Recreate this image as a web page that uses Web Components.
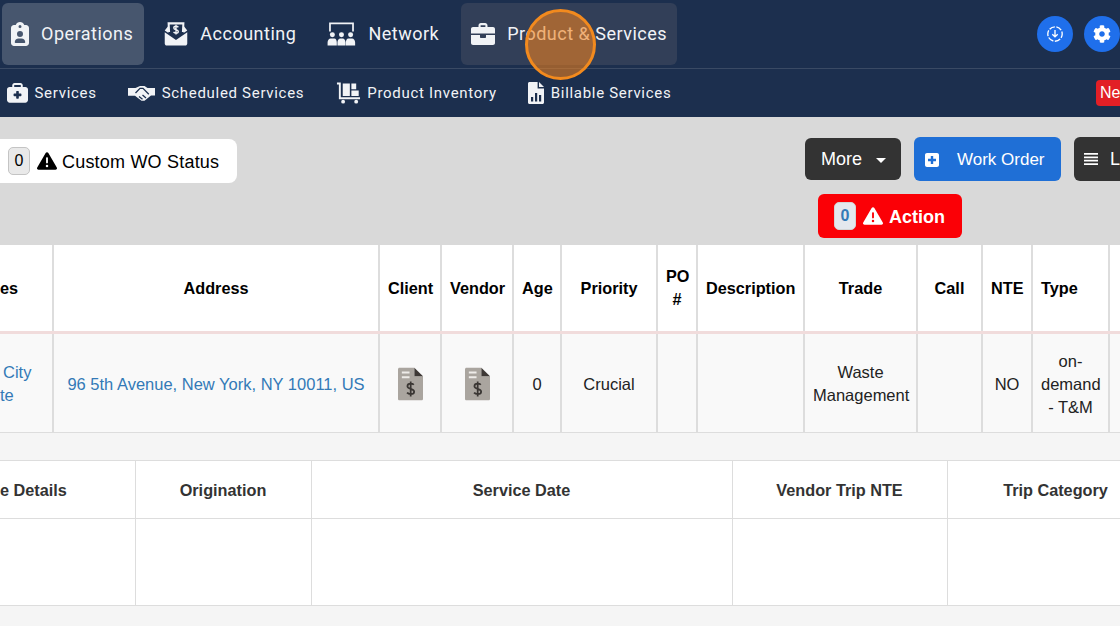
<!DOCTYPE html>
<html>
<head>
<meta charset="utf-8">
<title>Work Orders</title>
<style>
  html, body { margin: 0; height: 626px; overflow: hidden; background: #f5f5f5; }
  body { font-family: "Liberation Sans", Arial, sans-serif; }
</style>
</head>
<body>
<app-topbar>
  <nav-item active icon="clipboard" text="Operations"></nav-item>
  <nav-item icon="envelope" text="Accounting"></nav-item>
  <nav-item icon="network" text="Network"></nav-item>
  <nav-item hover icon="briefcase" text="Product &amp; Services"></nav-item>
  <round-btn slot="end" icon="download"></round-btn>
  <round-btn slot="end" icon="gear"></round-btn>
</app-topbar>
<app-subbar>
  <sub-item icon="medical" text="Services"></sub-item>
  <sub-item icon="handshake" text="Scheduled Services"></sub-item>
  <sub-item icon="dolly" text="Product Inventory"></sub-item>
  <sub-item icon="filechart" text="Billable Services"></sub-item>
  <span slot="end">Ne</span>
</app-subbar>
<app-toolbar></app-toolbar>
<wo-table id="main"></wo-table>
<wo-table id="trips"></wo-table>
<click-marker></click-marker>

<script>
// icon markup, each one keeps its own viewBox and its drawn size
const ICONS = {
  clipboard: `<svg width="18" height="24" viewBox="0 0 384 512" fill="currentColor"><path d="M192 0c-41.8 0-77.4 26.7-90.5 64H64C28.7 64 0 92.7 0 128V448c0 35.3 28.7 64 64 64H320c35.3 0 64-28.7 64-64V128c0-35.3-28.7-64-64-64H282.5C269.4 26.7 233.8 0 192 0zm0 64a32 32 0 1 1 0 64 32 32 0 1 1 0-64zM128 256a64 64 0 1 1 128 0 64 64 0 1 1 -128 0zM80 432c0-44.2 35.8-80 80-80h64c44.2 0 80 35.8 80 80c0 8.8-7.2 16-16 16H96c-8.8 0-16-7.2-16-16z"/></svg>`,
  envelope: `<svg width="24" height="25" viewBox="0 0 26 26" preserveAspectRatio="none" fill="currentColor"><path d="M5.500 11.500 5 2.500H21L20.500 11.500" fill="none" stroke="currentColor" stroke-width="2.200"/><path d="M4.400 5.500 .8 9.800 4.800 12.500zM21.600 5.500 25.200 9.800 21.200 12.500z"/><path d="M15.600 6.400C15 5.800 14.100 5.500 13 5.500 11.600 5.500 10.600 6.200 10.600 7.300 10.600 9.500 15.500 8.600 15.500 10.800 15.500 11.900 14.400 12.500 13 12.500 11.900 12.500 10.900 12.100 10.300 11.500M13 4V14" fill="none" stroke="currentColor" stroke-width="1.500"/><path d="M.8 11.800 13 19.800 25.200 11.800V23.400C25.200 24.600 24.200 25.600 23 25.600H3C1.800 25.600 .8 24.600 .8 23.400z"/></svg>`,
  network: `<svg width="29" height="24" viewBox="0 0 30 25"><path d="M3 10V1.500H27V10" fill="none" stroke="currentColor" stroke-width="1.800"/><g fill="currentColor"><circle cx="5.500" cy="13.200" r="2.600"/><circle cx="15" cy="13.200" r="2.600"/><circle cx="24.500" cy="13.200" r="2.600"/><path d="M.5 24.500v-3.200c0-2 1.400-4 3.200-4h3.800c1.800 0 2.600 2 2.600 4v3.200zM10.800 24.500v-3.200c0-2 1.200-4 3-4h2.400c1.800 0 3 2 3 4v3.200zM19.600 24.500v-3.200c0-2 .8-4 2.600-4h3.800c1.800 0 3.200 2 3.200 4v3.200z"/></g></svg>`,
  briefcase: `<svg width="24" height="22" viewBox="0 0 24 22" fill="currentColor"><path fill-rule="evenodd" d="M7.500 4V2.400C7.500 1.100 8.600 0 9.900 0h4.200c1.300 0 2.400 1.100 2.400 2.400V4H22c1.100 0 2 .9 2 2v4.400H0V6c0-1.100.9-2 2-2zM9.600 2.200V4h4.800V2.200z"/><path d="M0 12h9v2c0 .6.4 1 1 1h4c.6 0 1-.4 1-1v-2h9v8c0 1.100-.9 2-2 2H2c-1.100 0-2-.9-2-2z"/></svg>`,
  medical: `<svg width="21" height="21" viewBox="0 0 512 512" fill="currentColor"><path d="M184 48H328c4.400 0 8 3.600 8 8V96H176V56c0-4.400 3.600-8 8-8zm-56 8V96H64C28.700 96 0 124.700 0 160V416c0 35.300 28.700 64 64 64H448c35.300 0 64-28.700 64-64V160c0-35.300-28.700-64-64-64H384V56c0-30.900-25.100-56-56-56H184c-30.900 0-56 25.100-56 56zm96 152c0-8.800 7.200-16 16-16h32c8.800 0 16 7.200 16 16v48h48c8.800 0 16 7.200 16 16v32c0 8.800-7.200 16-16 16H288v48c0 8.800-7.200 16-16 16H240c-8.800 0-16-7.200-16-16V320H176c-8.800 0-16-7.200-16-16V272c0-8.800 7.200-16 16-16h48V208z"/></svg>`,
  handshake: `<svg width="27" height="16" viewBox="0 0 27 16"><path d="M0 3H7.500L12 1H16.500L19.500 3H27V10.500H23L16.500 15.800H13.500L7 10.800H0z" fill="currentColor"/><path d="M7.500 8 12 3.400H15L20.800 9.200M14.500 10 18 13M11 11.500 14.500 14.300" fill="none" stroke="#1c2f4e" stroke-width="1.300"/></svg>`,
  dolly: `<svg width="25" height="22" viewBox="0 0 26 22"><path d="M1 1.200H4V16.400H25" fill="none" stroke="currentColor" stroke-width="2"/><g fill="currentColor"><path d="M7 1h7.400v13H7zM16 1h5v6h-5zM16 8.400h7.600V14H16z"/><circle cx="7.400" cy="20" r="2"/><circle cx="21" cy="20" r="2"/></g></svg>`,
  filechart: `<svg width="16" height="22" viewBox="0 0 16 22" fill="currentColor"><path fill-rule="evenodd" d="M1.500 0H9.600V6.400H16V20.500C16 21.300 15.300 22 14.500 22H1.500C.7 22 0 21.300 0 20.500V1.500C0 .7.700 0 1.500 0zM3 15v4.500h2.200V15zM7 11v8.500h2.200V11zM11 13v6.500h2.200V13z"/><path d="M11 0 16 5H11z"/></svg>`,
  download: `<svg width="18" height="18" viewBox="0 0 20 20" fill="none" stroke="currentColor" stroke-width="1.500"><circle cx="10" cy="10" r="8" stroke-dasharray="6.500 1.700" stroke-dashoffset="2"/><path d="M10 5.500V13M7 10.200 10 13.200 13 10.200"/></svg>`,
  gear: `<svg width="18" height="18" viewBox="0 0 512 512" fill="currentColor"><path d="M487.400 315.700l-42.600-24.600c4.300-23.200 4.300-47 0-70.200l42.600-24.600c4.900-2.800 7.100-8.600 5.500-14-11.100-35.600-30-67.800-54.700-94.600-3.800-4.100-10-5.100-14.800-2.300L380.800 110c-17.900-15.400-38.500-27.300-60.800-35.100V25.800c0-5.600-3.900-10.500-9.400-11.700-36.700-8.200-74.300-7.800-109.200 0-5.500 1.200-9.400 6.100-9.400 11.700V75c-22.200 7.900-42.800 19.800-60.800 35.100L88.700 85.500c-4.900-2.800-11-1.900-14.800 2.300-24.700 26.700-43.600 58.900-54.700 94.600-1.700 5.400.6 11.200 5.500 14L67.300 221c-4.300 23.200-4.300 47 0 70.200l-42.600 24.600c-4.900 2.800-7.100 8.600-5.500 14 11.100 35.600 30 67.800 54.700 94.600 3.800 4.100 10 5.100 14.800 2.300l42.600-24.600c17.900 15.400 38.500 27.300 60.800 35.100v49.200c0 5.600 3.900 10.500 9.400 11.700 36.700 8.200 74.300 7.800 109.200 0 5.500-1.200 9.400-6.100 9.400-11.700v-49.200c22.200-7.900 42.800-19.800 60.800-35.100l42.600 24.600c4.900 2.800 11 1.900 14.800-2.300 24.700-26.700 43.600-58.900 54.700-94.600 1.500-5.500-.7-11.300-5.600-14.100zM256 336c-44.100 0-80-35.900-80-80s35.900-80 80-80 80 35.900 80 80-35.900 80-80 80z"/></svg>`,
  warn: `<svg width="20" height="20" viewBox="0 0 512 512" fill="currentColor"><path d="M256 32c14.200 0 27.300 7.500 34.500 19.800l216 368c7.300 12.400 7.300 27.700 .2 40.100S486.300 480 472 480H40c-14.300 0-27.600-7.700-34.700-20.100s-7-27.800 .2-40.100l216-368C228.700 39.500 241.800 32 256 32zm0 128c-13.300 0-24 10.700-24 24V296c0 13.300 10.700 24 24 24s24-10.700 24-24V184c0-13.300-10.700-24-24-24zm32 224a32 32 0 1 0 -64 0 32 32 0 1 0 64 0z"/></svg>`,
  plus: `<svg width="14" height="14" viewBox="0 0 14 14" fill="currentColor"><path fill-rule="evenodd" d="M2 0h10c1.100 0 2 .9 2 2v10c0 1.100-.9 2-2 2H2c-1.100 0-2-.9-2-2V2C0 .9.900 0 2 0zM5.800 3v2.800H3v2.400h2.800V11h2.400V8.200H11V5.800H8.200V3z"/></svg>`,
  list: `<svg width="15" height="14" viewBox="0 0 16 14" fill="currentColor"><path d="M0 0h16v2H0zM0 4h16v2H0zM0 8h16v2H0zM0 12h16v2H0z"/></svg>`,
  invoice: `<svg width="25" height="34" viewBox="0 0 26 34"><path d="M1.500 0H17V9H26V32.500C26 33.300 25.300 34 24.500 34H1.500C.7 34 0 33.300 0 32.500V1.500C0 .7.700 0 1.500 0z" fill="#aaa59f"/><path d="M17 0 26 9H17z" fill="#3d3835"/><path d="M4 5h8M4 10h8" stroke="#eeece9" stroke-width="2.200"/><path d="M16.400 17.800C15.700 17 14.600 16.700 13.200 16.700 11.200 16.700 9.800 17.700 9.800 19.300 9.800 22.700 16.800 21.500 16.800 25 16.800 26.700 15.200 27.500 13.200 27.500 11.700 27.500 10.300 27 9.400 26M13.200 14.500V30" fill="none" stroke="#3a3633" stroke-width="1.800"/></svg>`
};

class NavItem extends HTMLElement {
  constructor() {
    super();
    this.attachShadow({mode: "open"});
    this.shadowRoot.innerHTML = `
      <style>
        :host { display: flex; align-items: center; gap: 12px; height: 62px; padding: 0 11px 0 9px; border-radius: 6px; color: #f1f3f6; font: 18px Roboto, sans-serif; letter-spacing: .5px; white-space: nowrap; }
        :host([active]) { background: #47566e; }
        :host([hover]) { background: #323f58; padding: 0 10px; }
        span { display: flex; }
        svg { display: block; }
      </style>
      <span>${ICONS[this.getAttribute('icon')]}</span>${this.getAttribute('text').replace('&', '&amp;')}`;
  }
}

class SubItem extends HTMLElement {
  constructor() {
    super();
    this.attachShadow({mode: "open"});
    this.shadowRoot.innerHTML = `
      <style>
        :host { display: flex; align-items: center; gap: 6.5px; color: #f1f3f6; font: 15px Roboto, sans-serif; letter-spacing: .7px; white-space: nowrap; }
        span { display: flex; }
        svg { display: block; }
      </style>
      <span>${ICONS[this.getAttribute('icon')]}</span>${this.getAttribute('text')}`;
  }
}

class RoundBtn extends HTMLElement {
  constructor() {
    super();
    this.attachShadow({mode: "open"});
    this.shadowRoot.innerHTML = `
      <style>
        :host { display: flex; align-items: center; justify-content: center; width: 36px; height: 36px; flex: none; border-radius: 50%; background: #1f6feb; color: #fff; }
        svg { display: block; }
      </style>
      ${ICONS[this.getAttribute('icon')]}`;
  }
}

class AppTopbar extends HTMLElement {
  constructor() {
    super();
    this.attachShadow({mode: "open"});
    this.shadowRoot.innerHTML = `
      <style>
        :host { display: flex; justify-content: space-between; align-items: center; height: 69px; padding: 0 0 0 2px; box-sizing: border-box; background: #1c2f4e; border-bottom: 1px solid #3a4a64; overflow: hidden; }
        .left { display: flex; align-items: center; gap: 11px; margin-top: -1px; }
        .right { display: flex; gap: 11px; }
      </style>
      <div class="left"><slot></slot></div>
      <div class="right"><slot name="end"></slot></div>`;
  }
}

class AppSubbar extends HTMLElement {
  constructor() {
    super();
    this.attachShadow({mode: "open"});
    this.shadowRoot.innerHTML = `
      <style>
        :host { display: flex; justify-content: space-between; align-items: center; height: 48px; padding-left: 7px; background: #1c2f4e; overflow: hidden; }
        .left { display: flex; gap: 31.5px; }
        ::slotted(span) { width: 24px; height: 26px; box-sizing: border-box; padding-left: 4px; background: #e21f26; color: #fff; border-radius: 4px 0 0 4px; font: 16px/26px "Liberation Sans", sans-serif; white-space: nowrap; }
      </style>
      <div class="left"><slot></slot></div>
      <slot name="end"></slot>`;
  }
}

class AppToolbar extends HTMLElement {
  constructor() {
    super();
    this.attachShadow({mode: "open"});
    this.shadowRoot.innerHTML = `
      <style>
        :host { display: flex; height: 128px; background: #d9d9d9; overflow: hidden; justify-content: space-between; font-family: "Liberation Sans", sans-serif; }
        .pill { display: flex; align-items: center; align-self: flex-start; margin-top: 22px; width: 237px; height: 44px; box-sizing: border-box; padding-left: 8px; background: #fff; border-radius: 0 8px 8px 0; color: #000; font-size: 18px; letter-spacing: .2px; }
        .zero { display: flex; align-items: center; justify-content: center; width: 22px; height: 28px; box-sizing: border-box; background: #e9e9e9; border: 1px solid #c4c4c4; border-radius: 5px; font-size: 16px; }
        .warn { display: flex; margin: 0 5px 0 7px; }
        .warn svg { display: block; }
        .label { padding-top: 2px; }
        .right { width: 315px; flex: none; padding-top: 20px; box-sizing: border-box; }
        .row { display: flex; gap: 13px; align-items: center; height: 44px; }
        .btn { display: flex; flex: none; align-items: center; box-sizing: border-box; border-radius: 6px; color: #fff; white-space: nowrap; }
        .more { width: 96px; height: 42px; padding-left: 16px; background: #333; font-size: 18px; }
        .more i { margin-left: 14px; margin-top: 3px; border-top: 5px solid #fff; border-left: 5px solid transparent; border-right: 5px solid transparent; }
        .order { width: 147px; height: 44px; padding: 2px 0 0 11px; background: #1f6fd6; font-size: 17px; gap: 18px; }
        .order svg { display: block; }
        .list { width: 46px; height: 44px; padding-left: 10px; background: #333; font-size: 18px; gap: 12px; border-radius: 6px 0 0 6px; }
        .list svg { display: block; }
        .action { width: 144px; height: 44px; margin: 13px 0 0 13px; padding-left: 16px; background: #fb0006; font-size: 18px; font-weight: bold; }
        .action .zero { color: #337ab7; font-weight: bold; background: #e4e8ee; border-color: #d4d4d4; }
        .action .warn { margin-right: 6px; }
      </style>
      <div class="pill"><span class="zero">0</span><span class="warn">${ICONS.warn}</span><span class="label">Custom WO Status</span></div>
      <div class="right">
        <div class="row">
          <div class="btn more">More<i></i></div>
          <div class="btn order">${ICONS.plus}Work Order</div>
          <div class="btn list">${ICONS.list}L</div>
        </div>
        <div class="btn action"><span class="zero">0</span><span class="warn">${ICONS.warn}</span><span class="label">Action</span></div>
      </div>`;
  }
}

const TABLES = {
  main: {
    cols: [53, 326, 62, 72, 48, 96, 40, 107, 113, 65, 50, 77, 11],
    head: [['es', 'right:36'], 'Address', 'Client', 'Vendor', 'Age', 'Priority', 'PO #', 'Description', 'Trade', 'Call', 'NTE', ['Type', 'left'], ''],
    row: [['', 'frag'], ['96 5th Avenue, New York, NY 10011, US', 'link'], ['', 'invoice'], ['', 'invoice'], '0', 'Crucial', '', '', 'Waste Management', '', 'NO', 'on-demand - T&amp;M', '']
  },
  trips: {
    cols: [135, 176, 421, 215, 217],
    head: [['e Details', 'right:69'], 'Origination', 'Service Date', 'Vendor Trip NTE', 'Trip Category'],
    row: ['', '', '', '', '']
  }
};

class WoTable extends HTMLElement {
  connectedCallback() {
    const data = TABLES[this.id];
    const width = data.cols.reduce((a, b) => a + b, 0);
    const cell = (c, tag) => {
      if (!Array.isArray(c)) return `<${tag}>${c}</${tag}>`;
      if (c[1] == 'left') return `<${tag} style="text-align:left">${c[0]}</${tag}>`;
      if (c[1] == 'link') return `<${tag}><a>${c[0]}</a></${tag}>`;
      if (c[1] == 'invoice') return `<${tag}>${ICONS.invoice}</${tag}>`;
      if (c[1] == 'frag') return `<${tag} style="padding:2px 0 0"><a class="frag"><b>City</b><b class="te">te</b></a></${tag}>`;
      return `<${tag} style="text-align:right;padding-left:0;padding-right:${c[1].split(':')[1]}px">${c[0]}</${tag}>`;
    };
    this.attachShadow({mode: "open"});
    this.shadowRoot.innerHTML = `
      <style>
        :host { display: block; overflow: hidden; width: 1120px; color: #222; font: 16.5px/23px "Liberation Sans", sans-serif; }
        :host(#main) { height: 188px; background: #f5f5f5; }
        :host(#trips) { margin-top: 27px; height: 144px; background: #fff; border-top: 1px solid #ddd; border-bottom: 1px solid #ddd; }
        table { border-collapse: collapse; table-layout: fixed; width: ${width}px; }
        th, td { padding: 0 8px; text-align: center; vertical-align: middle; border-right: 2px solid #ddd; overflow: hidden; }
        th { background: #fff; color: #000; font-size: 16.25px; font-weight: bold; height: 86px; border-bottom: 3px solid #f1dcdc; white-space: nowrap; }
        th:nth-child(7) { white-space: normal; }
        td { background: #f9f9f9; height: 96px; padding-top: 2px; border-bottom: 1px solid #ddd; }
        th:last-child, td:last-child { border-right: 0; }
        :host(#trips) th, :host(#trips) td { border-right: 1px solid #ddd; background: #fff; }
        :host(#trips) th { height: 56px; padding-top: 1px; color: #333; border-bottom: 1px solid #ddd; }
        :host(#trips) td { height: 86px; padding-top: 0; border-bottom: 0; }
        a { color: #337ab7; white-space: nowrap; }
        .frag b { display: block; font-weight: normal; text-align: left; padding-left: 3px; }
        .frag .te { padding-left: 0; }
        svg { display: block; margin: 0 auto; }
      </style>
      <table>
        <colgroup>${data.cols.map(w => `<col style="width:${w}px">`).join('')}</colgroup>
        <tr>${data.head.map(c => cell(c, 'th')).join('')}</tr>
        <tr>${data.row.map(c => cell(c, 'td')).join('')}</tr>
      </table>`;
  }
}

class ClickMarker extends HTMLElement {
  constructor() {
    super();
    this.attachShadow({mode: "open"});
    this.shadowRoot.innerHTML = `
      <style>
        :host { position: absolute; left: 525px; top: 9px; width: 71px; height: 71px; box-sizing: border-box; border: 3px solid #f28a1e; border-radius: 50%; background: rgba(240, 130, 30, .58); }
      </style>`;
  }
}

customElements.define('nav-item', NavItem);
customElements.define('sub-item', SubItem);
customElements.define('round-btn', RoundBtn);
customElements.define('app-topbar', AppTopbar);
customElements.define('app-subbar', AppSubbar);
customElements.define('app-toolbar', AppToolbar);
customElements.define('wo-table', WoTable);
customElements.define('click-marker', ClickMarker);
</script>
</body>
</html>
